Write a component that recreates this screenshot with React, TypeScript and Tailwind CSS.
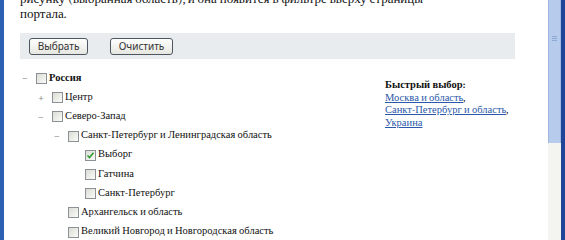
import type { ReactNode } from "react";

type Node = {
  label: string;
  depth: number;
  toggle?: "-" | "+";
  checked?: boolean;
  bold?: boolean;
};

const tree: Node[] = [
  { label: "Россия", depth: 0, toggle: "-", bold: true },
  { label: "Центр", depth: 1, toggle: "+" },
  { label: "Северо-Запад", depth: 1, toggle: "-" },
  { label: "Санкт-Петербург и Ленинградская область", depth: 2, toggle: "-" },
  { label: "Выборг", depth: 3, checked: true },
  { label: "Гатчина", depth: 3 },
  { label: "Санкт-Петербург", depth: 3 },
  { label: "Архангельск и область", depth: 2 },
  { label: "Великий Новгород и Новгородская область", depth: 2 },
];

const quick = ["Москва и область", "Санкт-Петербург и область", "Украина"];

const indent = ["pl-[2px]", "pl-[18px]", "pl-[34px]", "pl-[51px]"];

function Checkbox({ checked }: { checked?: boolean }) {
  return (
    <span className="flex h-[11px] w-[11px] shrink-0 items-center justify-center border border-[#8c9196] bg-gradient-to-br from-[#dcdcd6] to-[#fbfbf8]">
      {checked && (
        <svg width="9" height="9" viewBox="0 0 9 9">
          <path d="M1.5 4.5 L3.5 6.5 L7.5 1.8" fill="none" stroke="#2f9a2f" strokeWidth="1.6" />
        </svg>
      )}
    </span>
  );
}

function Btn({ children, w }: { children: ReactNode; w: string }) {
  return (
    <button
      type="button"
      className={`flex h-[17px] ${w} items-center justify-center rounded-[3px] border border-[#4d5660] bg-gradient-to-b from-white to-[#e6e6e0] font-sans text-[10px] text-[#333]`}
    >
      {children}
    </button>
  );
}

export default function App() {
  return (
    <div className="flex h-[240px] w-[565px] overflow-hidden bg-white">
      <div className="w-[4px] shrink-0 bg-[#2d5fb2]" />
      <div className="flex-1 pl-[16px] font-serif text-[#111]">
        <p className="-mt-[9px] w-[500px] text-[13px] leading-[15px]">
          рисунку (выбранная область), и она появится в фильтре вверху страницы
          <br />
          портала.
        </p>

        <div className="mt-[12px] flex h-[26px] w-[495px] items-center gap-[22px] bg-[#e9ecef] pl-[9px]">
          <Btn w="w-[59px]">Выбрать</Btn>
          <Btn w="w-[63px]">Очистить</Btn>
        </div>

        <div className="mt-[10px] flex">
          <div className="w-[365px] text-[10.5px]">
            {tree.map((n) => (
              <div key={n.label} className={`flex h-[19.2px] items-center ${indent[n.depth]}`}>
                <span className="w-[14px] shrink-0 text-[11px] text-[#888]">
                  {n.toggle === "-" ? "–" : n.toggle === "+" ? "+" : ""}
                </span>
                <Checkbox checked={n.checked} />
                <span className={`ml-[2px] whitespace-nowrap ${n.bold ? "font-bold" : ""}`}>{n.label}</span>
              </div>
            ))}
          </div>

          <div className="pt-[10px] text-[10.5px] leading-[12.7px]">
            <div className="font-bold">Быстрый выбор:</div>
            {quick.map((q, i) => (
              <div key={q}>
                <a href="#" className="text-[#2b58a8] underline">
                  {q}
                </a>
                {i < quick.length - 1 && ","}
              </div>
            ))}
          </div>
        </div>
      </div>

      <div className="flex w-[13px] shrink-0 flex-col">
        <div className="relative h-[143px] border-x border-[#9fb8e0] bg-[#b7cbec]">
          <div className="absolute left-[3px] top-[36px] flex w-[5px] flex-col gap-[1px]">
            <span className="h-px bg-[#8ea8d4]" />
            <span className="h-px bg-[#8ea8d4]" />
            <span className="h-px bg-[#8ea8d4]" />
          </div>
        </div>
        <div className="flex-1 bg-[#f4f4f0]" />
      </div>
      <div className="w-[4px] shrink-0 bg-[#1e4598]" />
    </div>
  );
}
